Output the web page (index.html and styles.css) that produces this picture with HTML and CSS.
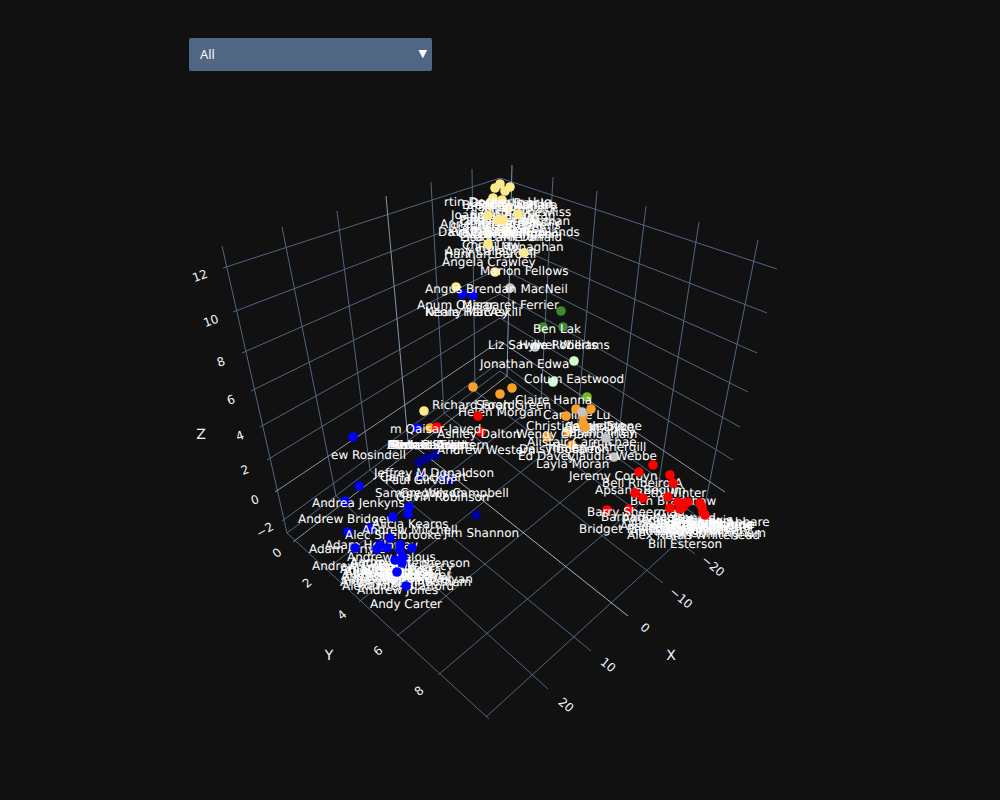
FILE: index.html
```html
<!DOCTYPE html>
<html lang="en">
<head>
<meta charset="utf-8">
<title>MP scatter 3D</title>
<link rel="stylesheet" href="styles.css">
</head>
<body>
<main class="chart">
<svg class="plot" viewBox="0 0 1000 800" width="1000" height="800" xmlns="http://www.w3.org/2000/svg">
<g class="grid">
<path d="M223 268L500 178L777 269M233 312L500 210L767 313M242 353L500 240L757 353M251 391L500 268L748 392M260 427L500 294L740 427M267 460L500 318L733 460M282 521L500 362L718 522"/>
<path d="M222 246L287 533M282 227L336 496M337 211L370 470M431 182L444 413M472 169L475 391M553 177L541 401M597 191L577 427M646 206L616 457M699 222L658 488M758 240L702 520"/>
<path d="M287 533L500 371L702 520M287 533L489 719M486 717L702 520"/>
<path d="M548 689L336 496M591 651L370 470M663 583L444 413M695 554L475 391M326 570L541 401M359 602L577 427M397 636L616 457M438 675L658 488"/>
</g>
<g class="grid zero">
<path d="M275 492L500 341L725 492M386 196L408 441M512 165L507 376M293 542L507 376"/>
</g>
<g class="grid zero-floor">
<path d="M628 616L408 441"/>
</g>
<g class="pts">
<circle class="yellow" cx="500" cy="184" r="4.8"/><circle class="yellow" cx="510" cy="187" r="4.8"/><circle class="yellow" cx="495" cy="188" r="4.8"/><circle class="yellow" cx="505" cy="191" r="4.8"/><circle class="yellow" cx="493" cy="198" r="4.8"/><circle class="yellow" cx="502" cy="200" r="4.8"/><circle class="yellow" cx="490" cy="203" r="4.8"/><circle class="yellow" cx="508" cy="208" r="4.8"/><circle class="yellow" cx="507" cy="230" r="4.8"/><circle class="yellow" cx="488" cy="233" r="4.8"/><circle class="yellow" cx="495" cy="272" r="4.8"/><circle class="yellow" cx="456" cy="287" r="4.8"/><circle class="yellow" cx="424" cy="411" r="4.8"/>
<circle class="gray" cx="510" cy="288" r="4.8"/><circle class="gray" cx="535" cy="347" r="4.8"/><circle class="gray" cx="614" cy="457" r="4.8"/>
<circle class="blue" cx="462" cy="294" r="4.8"/><circle class="blue" cx="473" cy="295" r="4.8"/><circle class="blue" cx="417" cy="428" r="4.8"/><circle class="blue" cx="353" cy="437" r="4.8"/><circle class="blue" cx="359" cy="486" r="4.8"/><circle class="blue" cx="345" cy="501" r="4.8"/><circle class="blue" cx="370" cy="528" r="4.8"/><circle class="blue" cx="348" cy="532" r="4.8"/>
<circle class="navy" cx="419" cy="462" r="4.8"/><circle class="navy" cx="427" cy="458" r="4.8"/><circle class="navy" cx="435" cy="455" r="4.8"/><circle class="navy" cx="420" cy="475" r="4.8"/><circle class="navy" cx="443" cy="477" r="4.8"/><circle class="navy" cx="451" cy="480" r="4.8"/><circle class="navy" cx="476" cy="515" r="4.8"/>
<circle class="orange" cx="430" cy="428" r="4.8"/><circle class="orange" cx="473" cy="387" r="4.8"/><circle class="orange" cx="500" cy="394" r="4.8"/><circle class="orange" cx="512" cy="388" r="4.8"/><circle class="orange" cx="568" cy="432" r="4.8"/><circle class="orange" cx="547" cy="437" r="4.8"/><circle class="orange" cx="572" cy="445" r="4.8"/>
<circle class="green" cx="561" cy="311" r="4.8"/><circle class="green" cx="563" cy="327" r="4.8"/><circle class="green" cx="543" cy="327" r="4.8"/><circle class="mint" cx="574" cy="361" r="4.8"/><circle class="mint" cx="553" cy="382" r="4.8"/><circle class="lime" cx="587" cy="397" r="4.8"/>
<circle class="red" cx="437" cy="427" r="4.8"/><circle class="red" cx="481" cy="432" r="4.8"/><circle class="red" cx="607" cy="510" r="4.8"/><circle class="red" cx="629" cy="509" r="4.8"/>
</g>
<g class="names">
<text x="444" y="206">rtin Docherty-Hug</text><text x="462" y="209">Brendan O'Hara</text><text x="478" y="209">Pete Wishart</text><text x="470" y="207">Deidre Brock</text><text x="466" y="211">Alan Brown</text><text x="484" y="212">Mhairi Black</text>
<text x="451" y="219">Joanna Cherry</text><text x="470" y="219">Ronnie Cowan</text><text x="480" y="216">Alison Thewliss</text><text x="459" y="224">Patrick Grady</text><text x="460" y="225">Douglas Chapman</text><text x="470" y="222">Peter Grant</text><text x="482" y="226">Drew Hendry</text>
<text x="440" y="228">Anne McLaughlin</text><text x="438" y="236">Dave Doogan</text><text x="448" y="236">Kirsty Blackman</text><text x="483" y="236">Gavin Newlands</text><text x="460" y="241">Lisa Cameron</text><text x="462" y="241">Stuart McDonald</text><text x="450" y="232">Stewart Hosie</text><text x="466" y="233">John Nicolson</text><text x="474" y="238">David Linden</text><text x="458" y="238">Owen Thompson</text><text x="470" y="229">Chris Stephens</text>
<text x="462" y="249">Chris Law</text><text x="466" y="251">Carol Monaghan</text><text x="445" y="255">Amy Callaghan</text><text x="444" y="258">Hannah Bardell</text><text x="442" y="266">Angela Crawley</text><text x="480" y="275">Marion Fellows</text>
<text x="425" y="293">Angus Brendan MacNeil</text><text x="417" y="309">Anum Qaisar</text><text x="462" y="309">Margaret Ferrier</text><text x="425" y="316">Kenny MacAskill</text><text x="425" y="316">Neale Hanvey</text>
<text x="533" y="333">Ben Lak</text><text x="488" y="349">Liz Saville Roberts</text><text x="519" y="349">Hywel Williams</text><text x="480" y="368">Jonathan Edwa</text><text x="524" y="383">Colum Eastwood</text><text x="515" y="404">Claire Hanna</text>
<text x="432" y="409">Richard Foord</text><text x="476" y="409">Sarah Green</text><text x="458" y="416">Helen Morgan</text><text x="543" y="419">Caroline Lu</text>
<text x="526" y="430">Christine Jardine</text><text x="565" y="431">Sarah Dyke</text><text x="570" y="430">Jamie Stone</text><text x="390" y="433">m Qaisar-Javed</text><text x="437" y="438">Ashley Dalton</text><text x="516" y="438">Wendy Chamberlain</text><text x="562" y="436">Sarah Olney</text>
<text x="527" y="446">Alistair Carmichae</text><text x="387" y="449">Mark Garnier</text><text x="390" y="449">Michael Ellis</text><text x="388" y="449">Edward Argar</text><text x="392" y="449">Robert Courts</text><text x="387" y="449">Alistair Strathern</text><text x="437" y="454">Andrew Western</text><text x="519" y="453">Daisy Cooper</text><text x="546" y="453">Tim Farron</text><text x="552" y="451">Helen Fothergill</text>
<text x="518" y="460">Ed Davey</text><text x="567" y="460">Claudia Webbe</text><text x="536" y="468">Layla Moran</text><text x="569" y="480">Jeremy Corbyn</text>
<text x="374" y="477">Jeffrey M Donaldson</text><text x="380" y="481">Carla Lockhart</text><text x="385" y="484">Paul Girvan</text><text x="375" y="497">Sammy Wilson</text><text x="400" y="497">Gregory Campbell</text><text x="396" y="501">Gavin Robinson</text>
<text x="602" y="487">Bell Ribeiro-A</text><text x="595" y="494">Apsana Begum</text><text x="635" y="497">Beth Winter</text><text x="630" y="505">Ben Bradshaw</text><text x="587" y="516">Barry Sheerman</text><text x="601" y="521">Barbara Keeley</text><text x="622" y="522">Andy McDonald</text>
<text x="640" y="525">Angela Rayner</text><text x="648" y="526">Clive Lewis</text><text x="660" y="528">Rachel Hopkins</text><text x="688" y="526">Diane Abbare</text><text x="620" y="530">Alison McGovern</text><text x="650" y="532">Barry Gardiner</text><text x="690" y="530">Alex Sobel</text><text x="630" y="527">Abena Oppong</text><text x="665" y="533">Afzal Khan</text><text x="655" y="529">Andrew Gwynne</text><text x="688" y="534">Ian Lavery</text><text x="640" y="533">Ann Clwyd</text><text x="672" y="524">Ben Lewis</text><text x="630" y="535">Anna McMorrin</text><text x="700" y="528">Bell Rose</text>
<text x="579" y="533">Bridget Phillipson</text><text x="660" y="537">Alex Cunningham</text><text x="627" y="539">Alex Norris</text><text x="665" y="539">Alan Whitehead</text><text x="648" y="548">Bill Esterson</text>
<text x="331" y="459">ew Rosindell</text><text x="312" y="507">Andrea Jenkyns</text><text x="298" y="523">Andrew Bridgen</text><text x="372" y="528">Alicia Kearns</text><text x="362" y="534">Andrew Mitchell</text><text x="345" y="539">Alec Shelbrooke</text><text x="444" y="537">Jim Shannon</text>
<text x="325" y="549">Adam Holloway</text><text x="309" y="553">Adam Afriyie</text><text x="347" y="561">Andrew Selous</text><text x="350" y="567">Andrew Stephenson</text><text x="312" y="570">Andrew Griffith</text><text x="350" y="566">Aaron Bell</text><text x="372" y="570">Andrew Percy</text>
<text x="340" y="573">Amanda Milling</text><text x="345" y="577">Alun Cairns</text><text x="341" y="580">Andrea Leadsom</text><text x="343" y="583">Anne-Marie Trevelyan</text><text x="340" y="586">Antony Higginbotham</text><text x="375" y="582">Andrew Bray</text><text x="353" y="578">Ann Davies</text><text x="360" y="574">Alberto Costa</text><text x="342" y="590">Alexander Stafford</text><text x="357" y="594">Andrew Jones</text><text x="370" y="608">Andy Carter</text><text x="348" y="571">Alan Mak</text><text x="366" y="579">Andrew Lewer</text><text x="352" y="584">Alex Burghart</text><text x="362" y="576">Adam Jogee</text><text x="344" y="575">Alan Campbell</text><text x="358" y="588">Ali Miller</text>
</g>
<g class="pts">
<circle class="yellow" cx="524" cy="253" r="4.8"/><circle class="yellow" cx="518" cy="214" r="4.8"/><circle class="yellow" cx="488" cy="215" r="4.8"/><circle class="yellow" cx="498" cy="220" r="4.8"/><circle class="yellow" cx="503" cy="220" r="4.8"/><circle class="yellow" cx="488" cy="244" r="4.8"/>
<circle class="blue" cx="409" cy="507" r="4.8"/><circle class="blue" cx="408" cy="514" r="4.8"/><circle class="blue" cx="393" cy="517" r="4.8"/><circle class="blue" cx="390" cy="538" r="4.8"/><circle class="blue" cx="380" cy="545" r="4.8"/><circle class="blue" cx="355" cy="548" r="4.8"/><circle class="blue" cx="377" cy="549" r="4.8"/><circle class="blue" cx="387" cy="548" r="4.8"/><circle class="blue" cx="400" cy="545" r="4.8"/><circle class="blue" cx="412" cy="548" r="4.8"/><circle class="blue" cx="400" cy="550" r="4.8"/><circle class="blue" cx="403" cy="557" r="4.8"/><circle class="blue" cx="395" cy="560" r="4.8"/><circle class="blue" cx="402" cy="563" r="4.8"/><circle class="blue" cx="397" cy="572" r="4.8"/><circle class="blue" cx="406" cy="586" r="4.8"/>
<circle class="orange" cx="576" cy="409" r="4.8"/><circle class="orange" cx="591" cy="409" r="4.8"/><circle class="orange" cx="566" cy="416" r="4.8"/><circle class="orange" cx="583" cy="415" r="4.8"/><circle class="orange" cx="583" cy="423" r="4.8"/><circle class="orange" cx="585" cy="427" r="4.8"/>
<circle class="gray" cx="582" cy="412" r="4.8"/><circle class="gray" cx="606" cy="438" r="4.8"/>
<circle class="red" cx="478" cy="416" r="4.8"/><circle class="red" cx="653" cy="465" r="4.8"/><circle class="red" cx="639" cy="472" r="4.8"/><circle class="red" cx="670" cy="475" r="4.8"/><circle class="red" cx="673" cy="483" r="4.8"/><circle class="red" cx="635" cy="493" r="4.8"/><circle class="red" cx="643" cy="498" r="4.8"/><circle class="red" cx="668" cy="497" r="4.8"/><circle class="red" cx="670" cy="508" r="4.8"/><circle class="red" cx="678" cy="502" r="4.8"/><circle class="red" cx="688" cy="502" r="4.8"/><circle class="red" cx="685" cy="503" r="4.8"/><circle class="red" cx="683" cy="507" r="4.8"/><circle class="red" cx="680" cy="509" r="4.8"/><circle class="red" cx="700" cy="503" r="4.8"/><circle class="red" cx="702" cy="507" r="4.8"/><circle class="red" cx="703" cy="512" r="4.8"/><circle class="red" cx="705" cy="515" r="4.8"/>
</g>
<g class="ticks">
<text transform="translate(200 276) rotate(-20)">12</text><text transform="translate(211 321) rotate(-20)">10</text><text transform="translate(221 362) rotate(-20)">8</text><text transform="translate(231 400) rotate(-20)">6</text><text transform="translate(240 436) rotate(-20)">4</text><text transform="translate(245 470) rotate(-20)">2</text><text transform="translate(255 500) rotate(-20)">0</text><text transform="translate(265 530) rotate(-30)">−2</text>
<text transform="translate(277 553) rotate(-40)">0</text><text transform="translate(307 583) rotate(-40)">2</text><text transform="translate(342 615) rotate(-40)">4</text><text transform="translate(378 651) rotate(-40)">6</text><text transform="translate(419 691) rotate(-40)">8</text>
<text transform="translate(566 705) rotate(40)">20</text><text transform="translate(608 665) rotate(40)">10</text><text transform="translate(645 628) rotate(40)">0</text><text transform="translate(681 598) rotate(40)">−10</text><text transform="translate(713 566) rotate(40)">−20</text>
<text class="axis" x="201" y="435">Z</text><text class="axis" x="329" y="656">Y</text><text class="axis" x="671" y="656">X</text>
</g>
</svg>
<div class="menu">
<span class="menu-label">All</span>
<span class="menu-arrow">▼</span>
</div>
</main>
</body>
</html>
```
FILE: styles.css
```css
html, body {
  margin: 0;
  background: #111111;
}

.chart {
  position: relative;
  width: 1000px;
  height: 800px;
  overflow: hidden;
  background: #111111;
}

.plot {
  display: block;
}

.grid path {
  fill: none;
  stroke: #506784;
  stroke-width: 1;
}

.grid.zero path {
  stroke: #8496ad;
}

.grid.zero-floor path {
  stroke: #a8b5c7;
}

.yellow { fill: #fde98b; }
.gray { fill: #c4c4c4; }
.blue { fill: #0000ff; }
.navy { fill: #000099; }
.orange { fill: #f9a02c; }
.green { fill: #3f8a2e; }
.mint { fill: #ccffcc; }
.lime { fill: #77b82a; }
.red { fill: #ff0000; }

.names text {
  font-family: "DejaVu Sans", sans-serif;
  font-size: 12px;
  fill: #ffffff;
  text-rendering: geometricPrecision;
}

.ticks text {
  font-family: "DejaVu Sans", sans-serif;
  font-size: 12px;
  fill: #f2f5fa;
  text-anchor: middle;
  dominant-baseline: central;
  text-rendering: geometricPrecision;
}

.ticks .axis {
  font-size: 14px;
}

.menu {
  position: absolute;
  left: 189px;
  top: 38px;
  width: 243px;
  height: 33px;
  box-sizing: border-box;
  padding: 0 5px 2px 11px;
  display: flex;
  align-items: center;
  justify-content: space-between;
  background: #506784;
  border-radius: 2px;
  font-family: "Open Sans", sans-serif;
  font-size: 13px;
  font-weight: 500;
  color: #ffffff;
}

.menu-arrow {
  font-family: "DejaVu Sans", sans-serif;
  font-size: 11px;
  line-height: 1;
  color: #ffffff;
}
```
